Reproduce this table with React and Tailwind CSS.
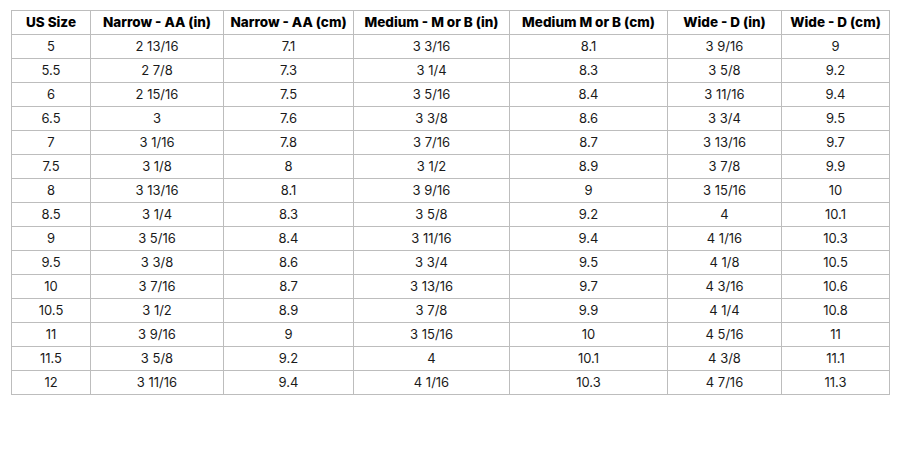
const headers = [
  "US Size",
  "Narrow - AA (in)",
  "Narrow - AA (cm)",
  "Medium - M or B (in)",
  "Medium M or B (cm)",
  "Wide - D (in)",
  "Wide - D (cm)",
];

const widths = ["w-[79px]", "w-[133px]", "w-[130px]", "w-[156px]", "w-[158px]", "w-[114px]", "w-[108px]"];

const rows = [
  ["5", "2 13/16", "7.1", "3 3/16", "8.1", "3 9/16", "9"],
  ["5.5", "2 7/8", "7.3", "3 1/4", "8.3", "3 5/8", "9.2"],
  ["6", "2 15/16", "7.5", "3 5/16", "8.4", "3 11/16", "9.4"],
  ["6.5", "3", "7.6", "3 3/8", "8.6", "3 3/4", "9.5"],
  ["7", "3 1/16", "7.8", "3 7/16", "8.7", "3 13/16", "9.7"],
  ["7.5", "3 1/8", "8", "3 1/2", "8.9", "3 7/8", "9.9"],
  ["8", "3 13/16", "8.1", "3 9/16", "9", "3 15/16", "10"],
  ["8.5", "3 1/4", "8.3", "3 5/8", "9.2", "4", "10.1"],
  ["9", "3 5/16", "8.4", "3 11/16", "9.4", "4 1/16", "10.3"],
  ["9.5", "3 3/8", "8.6", "3 3/4", "9.5", "4 1/8", "10.5"],
  ["10", "3 7/16", "8.7", "3 13/16", "9.7", "4 3/16", "10.6"],
  ["10.5", "3 1/2", "8.9", "3 7/8", "9.9", "4 1/4", "10.8"],
  ["11", "3 9/16", "9", "3 15/16", "10", "4 5/16", "11"],
  ["11.5", "3 5/8", "9.2", "4", "10.1", "4 3/8", "11.1"],
  ["12", "3 11/16", "9.4", "4 1/16", "10.3", "4 7/16", "11.3"],
];

function App() {
  return (
    <div className="w-[900px] h-[450px] bg-white pl-[11px] pt-[10px] font-['Inter','Liberation_Sans',sans-serif] text-[#1a1a1a]">
      <table className="border-collapse table-fixed w-[878px] border border-[#bdbdbd]">
        <thead>
          <tr className="h-[24px]">
            {headers.map((h, i) => (
              <th
                key={h}
                className={`${widths[i]} border border-[#bdbdbd] text-[13.5px] font-extrabold text-center p-0 text-black`}
              >
                {h}
              </th>
            ))}
          </tr>
        </thead>
        <tbody>
          {rows.map((r) => (
            <tr key={r[0]} className="h-[24px]">
              {r.map((c, i) => (
                <td key={i} className="border border-[#bdbdbd] text-[13px] text-center p-0">
                  {c}
                </td>
              ))}
            </tr>
          ))}
        </tbody>
      </table>
    </div>
  );
}

export default App;
